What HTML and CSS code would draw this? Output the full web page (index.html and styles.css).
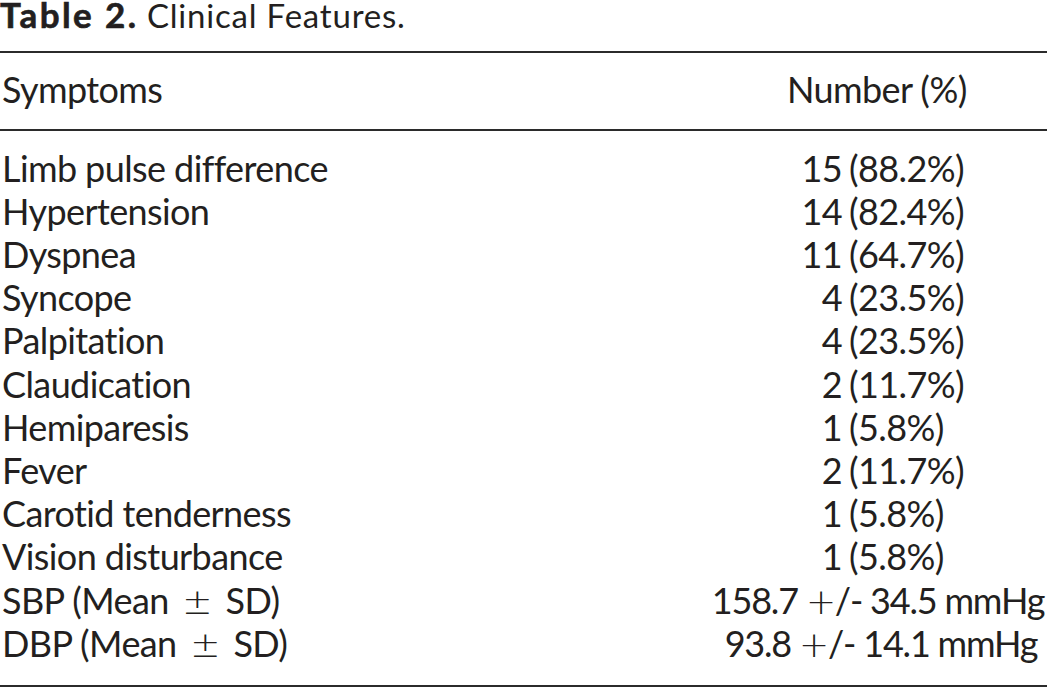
FILE: index.html
```html
<!DOCTYPE html>
<html lang="en">
<head>
<meta charset="utf-8">
<title>Table 2. Clinical Features.</title>
<link rel="stylesheet" href="styles.css">
</head>
<body>
<div class="page">
  <div class="caption"><span class="label">Table 2.</span> <span class="ctext">Clinical Features.</span></div>
  <div class="table">
    <div class="head">
      <div class="c1">Symptoms</div>
      <div class="c2 hd">Number (%)</div>
    </div>
    <div class="body">
      <div class="row"><div class="c1">Limb pulse difference</div><div class="c2"><span class="n">15</span><span class="p">(88.2%)</span></div></div>
      <div class="row"><div class="c1">Hypertension</div><div class="c2"><span class="n">14</span><span class="p">(82.4%)</span></div></div>
      <div class="row"><div class="c1">Dyspnea</div><div class="c2"><span class="n">11</span><span class="p">(64.7%)</span></div></div>
      <div class="row"><div class="c1">Syncope</div><div class="c2"><span class="n">4</span><span class="p">(23.5%)</span></div></div>
      <div class="row"><div class="c1">Palpitation</div><div class="c2"><span class="n">4</span><span class="p">(23.5%)</span></div></div>
      <div class="row"><div class="c1">Claudication</div><div class="c2"><span class="n">2</span><span class="p">(11.7%)</span></div></div>
      <div class="row"><div class="c1">Hemiparesis</div><div class="c2"><span class="n">1</span><span class="p">(5.8%)</span></div></div>
      <div class="row"><div class="c1">Fever</div><div class="c2"><span class="n">2</span><span class="p">(11.7%)</span></div></div>
      <div class="row"><div class="c1">Carotid tenderness</div><div class="c2"><span class="n">1</span><span class="p">(5.8%)</span></div></div>
      <div class="row"><div class="c1">Vision disturbance</div><div class="c2"><span class="n">1</span><span class="p">(5.8%)</span></div></div>
      <div class="row"><div class="c1">SBP (Mean <span class="pm">&plusmn;</span> SD)</div><div class="c2 ctr"><span class="mm">158.7 <span class="plus">+</span>/- 34.5 mmHg</span></div></div>
      <div class="row"><div class="c1">DBP (Mean <span class="pm">&plusmn;</span> SD)</div><div class="c2 ctr"><span class="mm mm2">93.8 <span class="plus">+</span>/- 14.1 mmHg</span></div></div>
    </div>
  </div>
</div>
</body>
</html>
```

FILE: styles.css
```css
html, body {
  margin: 0;
  padding: 0;
  background: #ffffff;
}

.page {
  width: 1047px;
  height: 689px;
  overflow: hidden;
  color: #231f20;
  font-family: Lato, "Open Sans", "DejaVu Sans", sans-serif;
}

.caption {
  font-size: 33px;
  line-height: 28px;
  height: 28px;
  padding-bottom: 23px;
  white-space: nowrap;
}

.label {
  font-size: 35px;
  font-weight: 700;
  letter-spacing: 2.4px;
  -webkit-text-stroke: 0.6px #231f20;
}

.ctext {
  letter-spacing: 0.8px;
}

.table {
  width: 1047px;
  border-top: 2px solid #2b2b2b;
  border-bottom: 2px solid #2b2b2b;
}

.head {
  display: grid;
  grid-template-columns: 700px 347px;
  font-size: 36px;
  line-height: 43.2px;
  letter-spacing: -0.6px;
  padding-top: 14.5px;
  padding-bottom: 18.5px;
  border-bottom: 2px solid #2b2b2b;
}

.hd {
  padding-left: 87px;
}

.body {
  padding-top: 15.5px;
  padding-bottom: 20px;
}

.row {
  display: grid;
  grid-template-columns: 700px 347px;
  font-size: 36px;
  line-height: 43.2px;
  height: 43.2px;
  letter-spacing: -0.6px;
  white-space: nowrap;
}

.c1 {
  padding-left: 2px;
}

.c2 {
  display: flex;
  white-space: nowrap;
}

.ctr {
  justify-content: center;
  padding-left: 9px;
}

.n {
  width: 142px;
  text-align: right;
}

.p {
  margin-left: 7px;
}

.mm {
  letter-spacing: -1.2px;
}

.mm2 {
  margin-left: 6px;
}

.pm {
  font-family: "DejaVu Sans", sans-serif;
  font-weight: 300;
  margin: 0 5px;
}

.plus {
  font-family: "DejaVu Sans", sans-serif;
  font-weight: 300;
}
```
